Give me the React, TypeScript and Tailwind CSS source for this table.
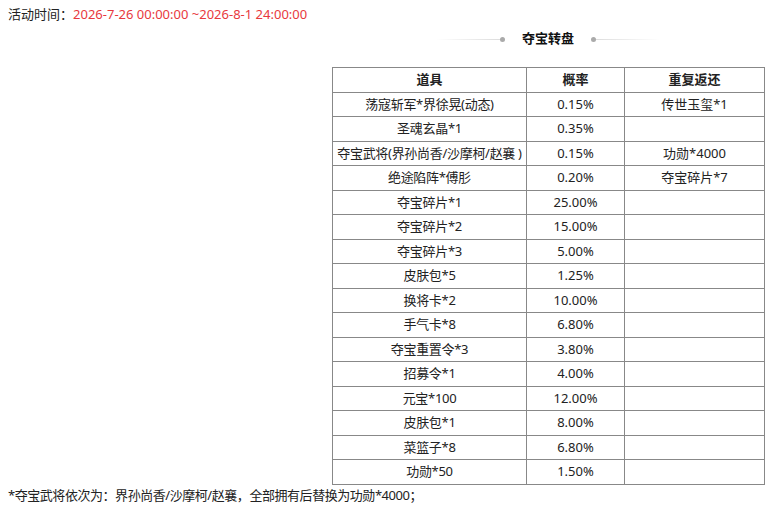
import React from 'react';

interface Prize {
    name: string;
    rate: string;
    refund: string;
}

const prizes: Prize[] = [
    { name: '荡寇斩军*界徐晃(动态)', rate: '0.15%', refund: '传世玉玺*1' },
    { name: '圣魂玄晶*1', rate: '0.35%', refund: '' },
    { name: '夺宝武将(界孙尚香/沙摩柯/赵襄 )', rate: '0.15%', refund: '功勋*4000' },
    { name: '绝途陷阵*傅肜', rate: '0.20%', refund: '夺宝碎片*7' },
    { name: '夺宝碎片*1', rate: '25.00%', refund: '' },
    { name: '夺宝碎片*2', rate: '15.00%', refund: '' },
    { name: '夺宝碎片*3', rate: '5.00%', refund: '' },
    { name: '皮肤包*5', rate: '1.25%', refund: '' },
    { name: '换将卡*2', rate: '10.00%', refund: '' },
    { name: '手气卡*8', rate: '6.80%', refund: '' },
    { name: '夺宝重置令*3', rate: '3.80%', refund: '' },
    { name: '招募令*1', rate: '4.00%', refund: '' },
    { name: '元宝*100', rate: '12.00%', refund: '' },
    { name: '皮肤包*1', rate: '8.00%', refund: '' },
    { name: '菜篮子*8', rate: '6.80%', refund: '' },
    { name: '功勋*50', rate: '1.50%', refund: '' },
];

const cell = 'border border-[#888] text-center p-0 leading-none';

const App = () => {
    return (
        <div className="w-[772px] h-[506px] bg-white text-[13px] text-[#222] font-['Noto_Sans','Noto_Sans_CJK_SC',sans-serif] px-2 pt-[5px]">
            <p className="h-[18px] leading-[18px]">
                活动时间：<span className="text-[#e8383d]">2026-7-26 00:00:00 ~2026-8-1 24:00:00</span>
            </p>

            <div className="flex justify-end">
                <div className="w-[432px]">
                    {/* title with decorative lines */}
                    <div className="flex items-center justify-center h-[30px] mt-[1px]">
                        <span className="w-[64px] h-px bg-gradient-to-r from-white to-[#ddd]" />
                        <span className="w-[5px] h-[5px] rounded-full bg-[#aaa]" />
                        <span className="px-[17px] font-bold text-[13px] text-[#111]">夺宝转盘</span>
                        <span className="w-[5px] h-[5px] rounded-full bg-[#aaa]" />
                        <span className="w-[64px] h-px bg-gradient-to-l from-white to-[#ddd]" />
                    </div>

                    <table className="w-[432px] mt-[13px] border-collapse table-fixed">
                        <colgroup>
                            <col className="w-[194px]" />
                            <col className="w-[98px]" />
                            <col className="w-[140px]" />
                        </colgroup>
                        <thead>
                            <tr className="h-[24.5px]">
                                <th className={`${cell} font-bold`}>道具</th>
                                <th className={`${cell} font-bold`}>概率</th>
                                <th className={`${cell} font-bold`}>重复返还</th>
                            </tr>
                        </thead>
                        <tbody>
                            {prizes.map(({ name, rate, refund }, index) => (
                                <tr key={index} className="h-[24.5px]">
                                    <td className={`${cell} whitespace-nowrap tracking-[-0.3px]`}>{name}</td>
                                    <td className={cell}>{rate}</td>
                                    <td className={cell}>{refund}</td>
                                </tr>
                            ))}
                        </tbody>
                    </table>
                </div>
            </div>

            <p className="leading-[20px] tracking-[-0.45px]">*夺宝武将依次为：界孙尚香/沙摩柯/赵襄，全部拥有后替换为功勋*4000；</p>
        </div>
    );
};

export default App;
